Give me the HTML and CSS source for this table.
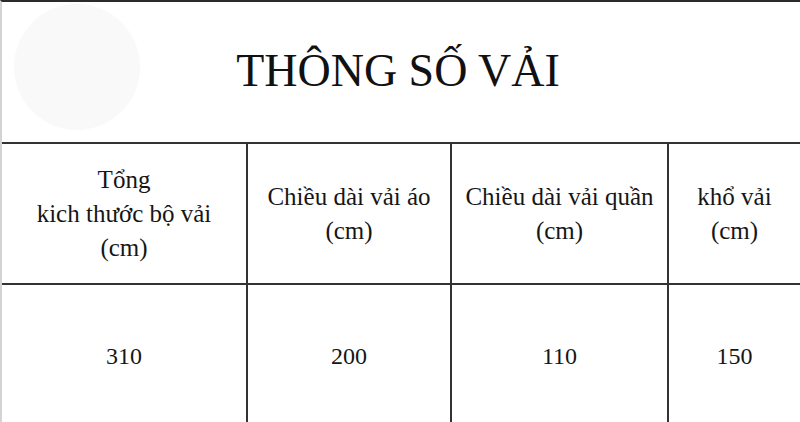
FILE: index.html
```html
<!DOCTYPE html>
<html lang="vi">
<head>
<meta charset="utf-8">
<title>Thông số vải</title>
<link rel="stylesheet" href="styles.css">
</head>
<body>
<div class="sheet">
  <div class="title-bar">
    <span class="watermark"></span>
    <h1 class="title">THÔNG SỐ VẢI</h1>
  </div>
  <div class="grid">
    <div class="cell head">Tổng<br>kich thước bộ vải<br>(cm)</div>
    <div class="cell head">Chiều dài vải áo<br>(cm)</div>
    <div class="cell head">Chiều dài vải quần<br>(cm)</div>
    <div class="cell head last">khổ vải<br>(cm)</div>
    <div class="cell data">310</div>
    <div class="cell data">200</div>
    <div class="cell data">110</div>
    <div class="cell data last">150</div>
  </div>
</div>
</body>
</html>
```

FILE: styles.css
```css
html, body {
  margin: 0;
  padding: 0;
  background: #ffffff;
}

body {
  font-family: "Liberation Serif", "Times New Roman", serif;
  color: #161616;
  overflow: hidden;
}

.sheet {
  border-top: 2px solid #2b2b2b;
  border-left: 2px solid #d4d4d4;
}

.title-bar {
  position: relative;
  height: 140px;
  display: flex;
  align-items: center;
  justify-content: center;
}

.watermark {
  position: absolute;
  left: 12px;
  top: 2px;
  width: 126px;
  height: 126px;
  border-radius: 50%;
  background: #f9f9f9;
}

.title {
  position: relative;
  margin: 0 6px 4px 0;
  font-size: 46px;
  font-weight: normal;
  color: #111111;
}

.grid {
  display: grid;
  grid-template-columns: 246px 204px 217px 1fr;
  grid-template-rows: 141px 141px;
  border-top: 2px solid #333;
}

.cell {
  box-sizing: border-box;
  display: flex;
  align-items: center;
  justify-content: center;
  text-align: center;
  border-right: 2px solid #333;
  font-size: 25px;
  line-height: 34px;
}

.cell.last {
  border-right: none;
}

.head {
  border-bottom: 2px solid #333;
}

.data {
  font-size: 24px;
}
```
